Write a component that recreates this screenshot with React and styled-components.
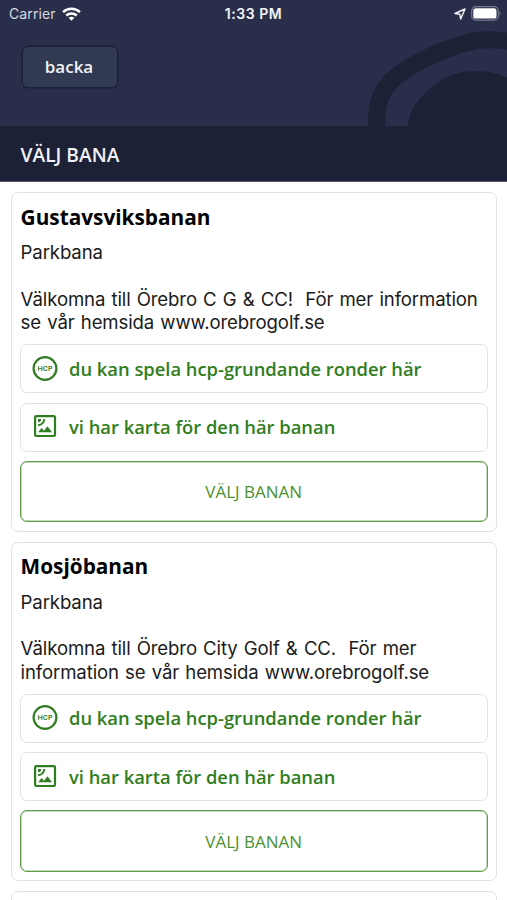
import React from 'react';
import styled, { createGlobalStyle } from 'styled-components';

const GlobalStyle = createGlobalStyle`
  * {
    box-sizing: border-box;
  }

  body {
    margin: 0;
    background: #fff;
    font-family: 'Open Sans', sans-serif;
  }
`;

const Screen = styled.div`
  width: 507px;
  height: 900px;
  overflow: hidden;
  background: #fff;
`;

const Header = styled.header`
  position: relative;
  height: 126px;
  background: #292f4a;
`;

const HeaderArt = styled.svg`
  position: absolute;
  top: 0;
  right: 0;
`;

const StatusBar = styled.div`
  position: relative;
  display: grid;
  grid-template-columns: 1fr auto 1fr;
  align-items: center;
  height: 27px;
  padding: 0 6px;
  color: #f4f5f8;
  font-family: Inter, sans-serif;
  font-size: 14px;
`;

const Carrier = styled.div`
  display: flex;
  align-items: center;
  gap: 6px;
  padding-left: 3px;
  color: #d8dae2;
  letter-spacing: 0.12px;
`;

const Clock = styled.div`
  font-size: 14px;
  font-weight: 600;
  letter-spacing: 0.55px;
`;

const StatusIcons = styled.div`
  display: flex;
  align-items: center;
  justify-content: flex-end;
  gap: 5px;
`;

const BackButton = styled.button`
  position: relative;
  display: block;
  width: 96px;
  height: 42px;
  margin: 19px 0 0 21.5px;
  padding: 0 1px 1px 0;
  border: 1px solid #1c2136;
  border-radius: 6px;
  background: #323952;
  box-shadow: 0 0 0 0.5px #1c2136;
  color: #f1f2f6;
  font: 600 17px 'Open Sans', sans-serif;
`;

const PageTitle = styled.h1`
  display: flex;
  align-items: center;
  height: 56px;
  margin: 0;
  padding: 2px 20.5px 0;
  border-bottom: 1px solid #595c6b;
  background: #1c2136;
  color: #f1f2f6;
  font-size: 19.2px;
  font-weight: 600;
`;

const CourseList = styled.main`
  display: flex;
  flex-direction: column;
  gap: 10px;
  padding: 10.3px 10px 0 10.5px;
`;

const Card = styled.section`
  flex: none;
  height: 339.5px;
  padding: 9.5px 8.5px 0;
  border: 1px solid #e2e2e2;
  border-radius: 7px;
`;

const CourseName = styled.h2`
  margin: 0 0 0 0.6px;
  color: #000;
  font-size: 20.8px;
  font-weight: 700;
  line-height: 28px;
`;

const CourseText = styled.p`
  margin: ${({ $gap }) => $gap}px 0 0 0.6px;
  color: #1b1b1b;
  font-family: Inter, sans-serif;
  font-size: 18.6px;
  letter-spacing: -0.13px;
  line-height: 23.4px;
  white-space: pre;
  word-spacing: 1.1px;
`;

const InfoRow = styled.div`
  display: flex;
  align-items: center;
  height: 49px;
  margin-top: 9.5px;
  padding: 0 0 1px 9.5px;
  border: 1px solid #e2e2e2;
  border-radius: 7px;
  color: #2f7d20;
  font-size: 18.35px;
  font-weight: 600;

  svg {
    flex: none;
    margin-right: 9.5px;
  }
`;

const SelectButton = styled.button`
  display: block;
  width: 100%;
  height: 61.5px;
  margin-top: 9.4px;
  padding: 0;
  border: 1px solid #5f9c48;
  border-radius: 7px;
  background: #fff;
  box-shadow: inset 0 0 0 0.5px #8fba7e;
  color: #4d9130;
  font: 400 17px 'Open Sans', sans-serif;
`;

const WifiIcon = () => (
  <svg width="19" height="14" viewBox="0 0 19 14" fill="none" stroke="#fff" strokeWidth="2.5">
    <path d="M1.1 5.1C5.8.7 13.2.7 17.9 5.1" />
    <path d="M4.2 8.5C7.2 5.8 11.8 5.8 14.8 8.5" />
    <path d="M6.6 10.8C8.3 9.4 10.7 9.4 12.4 10.8L9.5 13.8Z" fill="#fff" stroke="none" />
  </svg>
);

const LocationIcon = () => (
  <svg width="12" height="12" viewBox="0 0 12 12" fill="none" stroke="#f4f5f8" strokeWidth="1.4">
    <path d="M11 1L1 5.5L5.8 6.2L6.7 11Z" strokeLinejoin="round" />
  </svg>
);

const BatteryIcon = () => (
  <svg width="30" height="15" viewBox="0 0 30 15">
    <rect x="0.7" y="0.7" width="26.6" height="13.4" rx="4.2" fill="none" stroke="#777b8d" strokeWidth="1.2" />
    <rect x="2.3" y="2.3" width="23.2" height="10.2" rx="2.6" fill="#fff" />
    <path d="M28.5 5.2C30 5.8 30 9 28.5 9.6Z" fill="#777b8d" />
  </svg>
);

const HcpIcon = () => (
  <svg width="29" height="29" viewBox="-1 -1.5 29 29">
    <circle cx="13" cy="13" r="11.4" fill="none" stroke="#2f7d20" strokeWidth="2.2" />
    <text
      x="13"
      y="15.1"
      textAnchor="middle"
      textLength="15"
      lengthAdjust="spacingAndGlyphs"
      fill="#2f7d20"
      fontFamily="Inter, sans-serif"
      fontSize="6.5"
      fontWeight="600"
    >
      HCP
    </text>
  </svg>
);

const MapIcon = () => (
  <svg width="29" height="29" viewBox="0 0 29 29" fill="none" stroke="#2f7d20">
    <rect x="4.1" y="4.1" width="19.9" height="19.9" rx="1.2" strokeWidth="2.2" />
    <path d="M7 7H10.2A3.2 3.2 0 0 1 7 10.2Z" fill="#2f7d20" stroke="none" />
    <path d="M13.2 7A6.2 6.2 0 0 1 7 13.2" strokeWidth="1.9" />
    <path d="M7.2 20.3L10.6 16L13 18.8L16.5 14.3L21 20.3Z" fill="#2f7d20" stroke="none" />
  </svg>
);

const courses = [
  {
    name: 'Gustavsviksbanan',
    type: 'Parkbana',
    info: 'Välkomna till Örebro C G & CC!  För mer information\nse vår hemsida www.orebrogolf.se',
  },
  {
    name: 'Mosjöbanan',
    type: 'Parkbana',
    info: 'Välkomna till Örebro City Golf & CC.  För mer\ninformation se vår hemsida www.orebrogolf.se',
  },
];

const CourseCard = ({ course }) => (
  <Card>
    <CourseName>{course.name}</CourseName>
    <CourseText $gap={10.5}>{course.type}</CourseText>
    <CourseText $gap={23}>{course.info}</CourseText>
    <InfoRow>
      <HcpIcon />
      du kan spela hcp-grundande ronder här
    </InfoRow>
    <InfoRow>
      <MapIcon />
      vi har karta för den här banan
    </InfoRow>
    <SelectButton>VÄLJ BANAN</SelectButton>
  </Card>
);

const App = () => (
  <>
    <GlobalStyle />
    <Screen>
      <Header>
        <HeaderArt width="147" height="126" viewBox="360 0 147 126">
          <path
            d="M376.7 127V118C376.7 103 382 91 391 81C402 70 432 53 462 44C480 38.5 495 39 509 41.5"
            fill="none"
            stroke="#1c2136"
            strokeWidth="17"
          />
          <path d="M408 127C409 112 415 103 424 94C438 78 457 71 477 71C489 71 500 74 508 78V127Z" fill="#1c2136" />
        </HeaderArt>
        <StatusBar>
          <Carrier>
            Carrier
            <WifiIcon />
          </Carrier>
          <Clock>1:33 PM</Clock>
          <StatusIcons>
            <LocationIcon />
            <BatteryIcon />
          </StatusIcons>
        </StatusBar>
        <BackButton>backa</BackButton>
      </Header>
      <PageTitle>VÄLJ BANA</PageTitle>
      <CourseList>
        {courses.map((course) => (
          <CourseCard key={course.name} course={course} />
        ))}
        <Card />
      </CourseList>
    </Screen>
  </>
);

export default App;
